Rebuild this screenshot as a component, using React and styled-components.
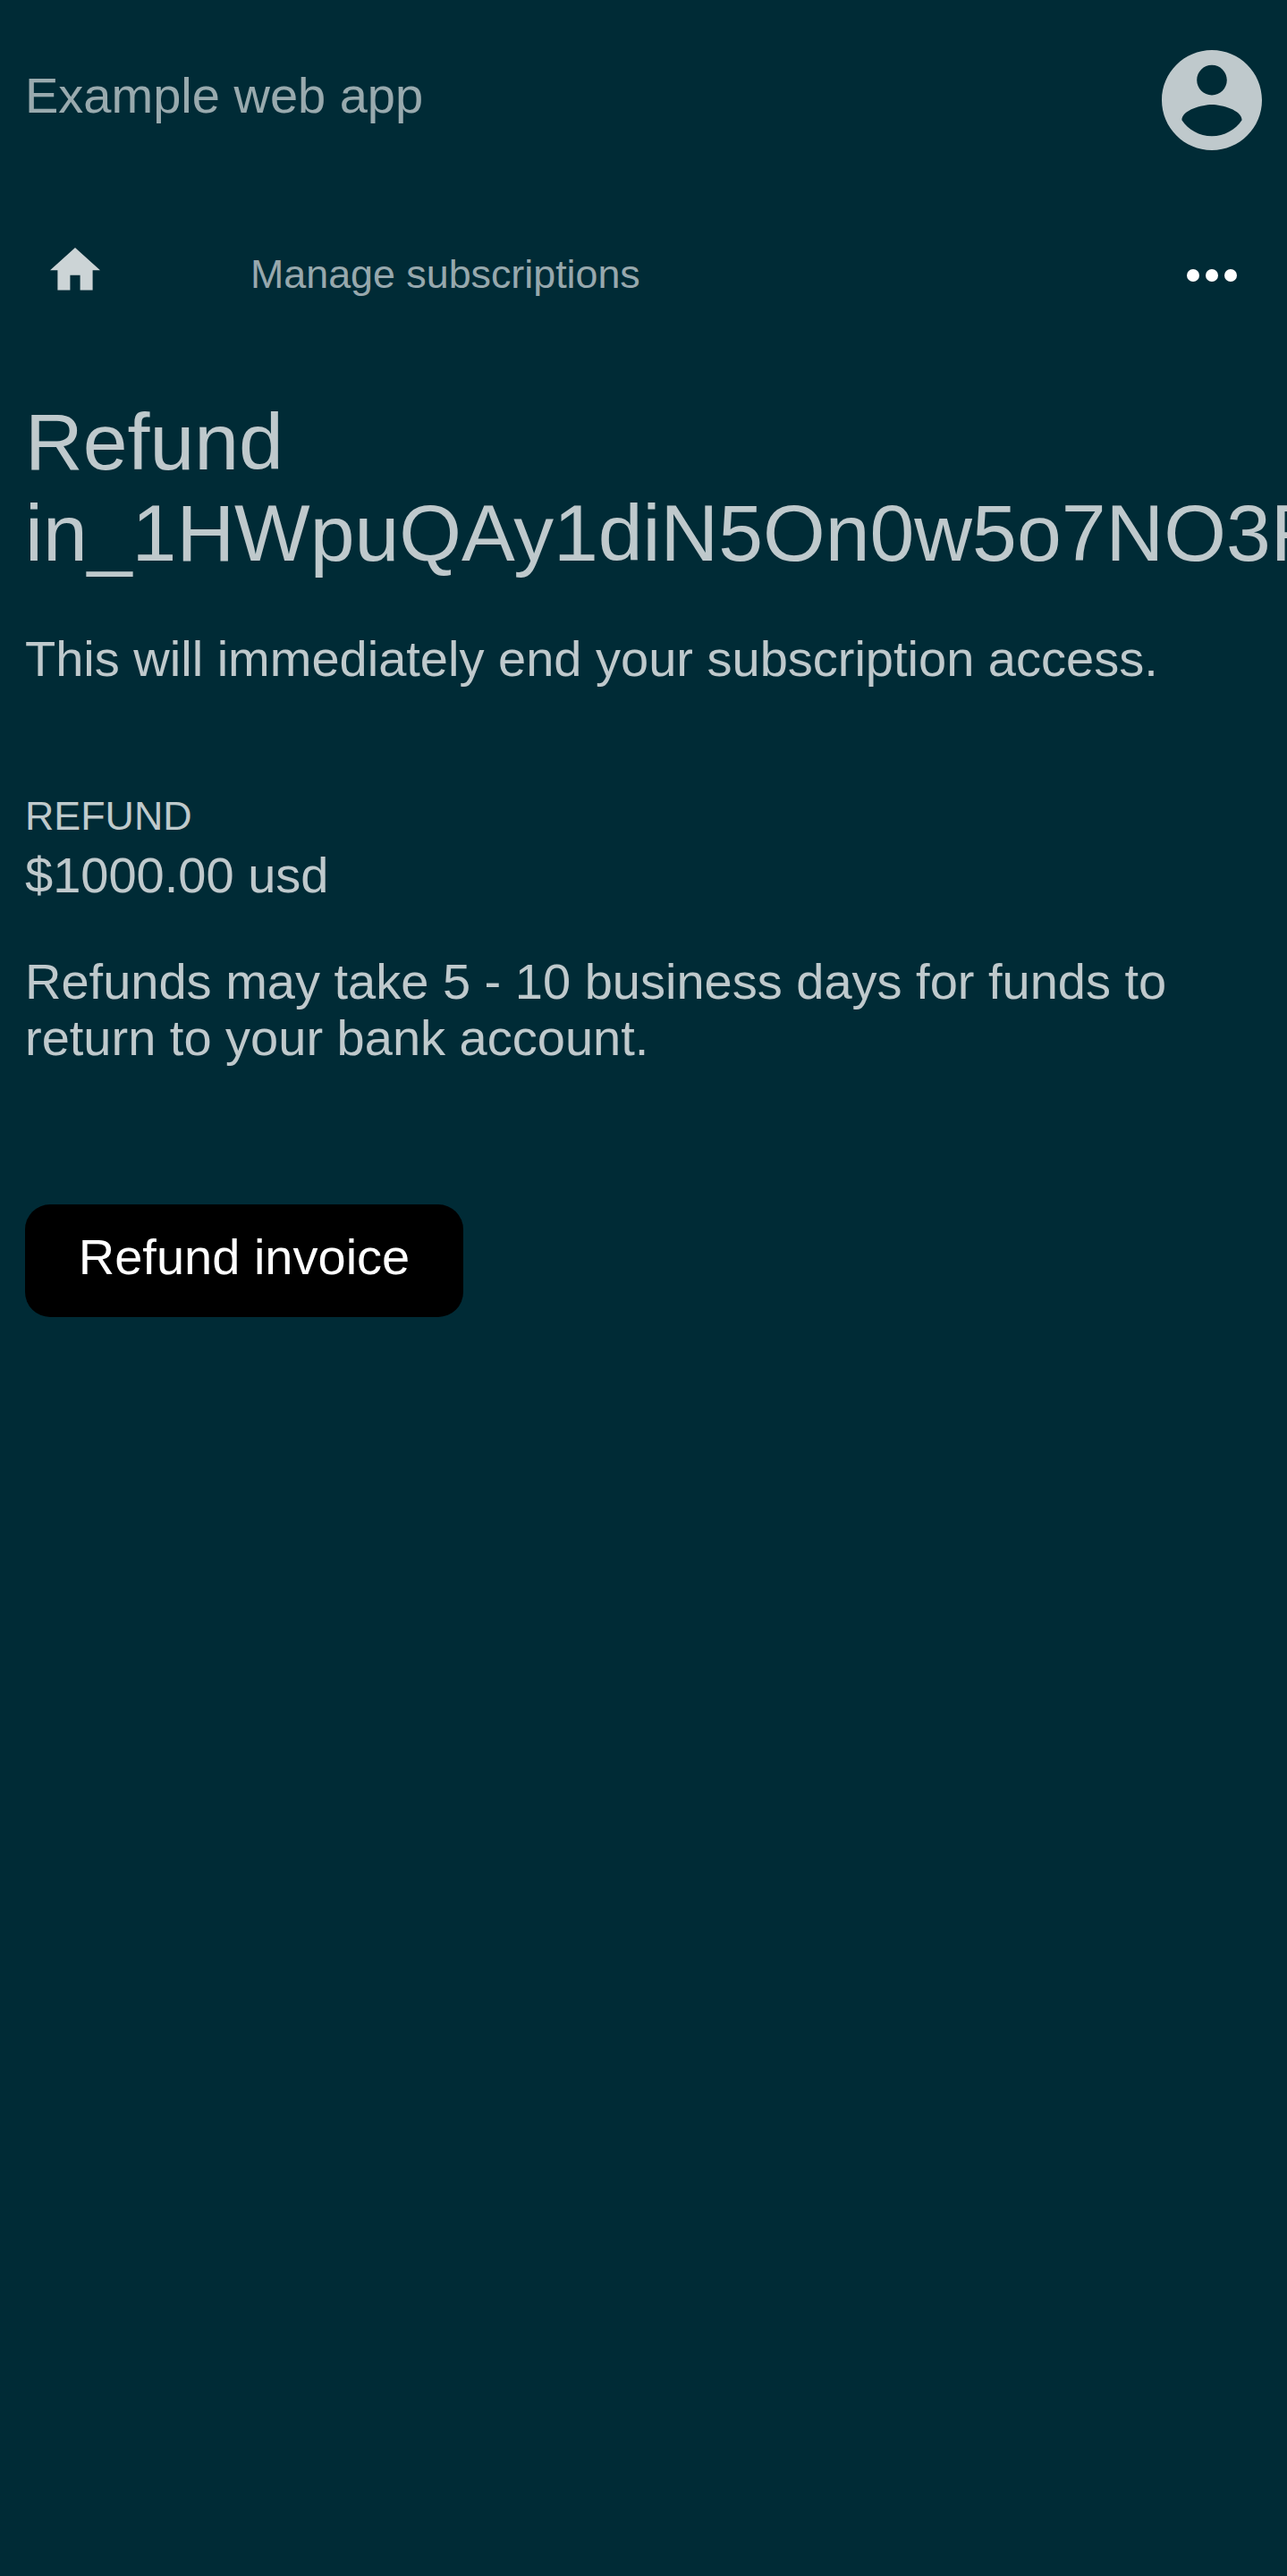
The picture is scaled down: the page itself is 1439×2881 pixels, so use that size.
import React from 'react';
import styled, { createGlobalStyle } from 'styled-components';

const GlobalStyle = createGlobalStyle`
  html, body {
    margin: 0;
    background: #002b36;
    overflow: hidden;
  }
`;

const Page = styled.div`
  box-sizing: border-box;
  width: 100%;
  min-height: 100vh;
  overflow: hidden;
  background: #002b36;
  color: rgba(255, 255, 255, 0.75);
  font-family: "Liberation Sans", Arial, sans-serif;
  font-size: 56px;
  line-height: 63px;
`;

const Header = styled.header`
  display: flex;
  justify-content: space-between;
  align-items: flex-start;
  height: 168px;
  padding: 56px 28px 0;
`;

const AppName = styled.div`
  margin-top: 19px;
  color: rgba(255, 255, 255, 0.6);
`;

const Icon = styled.svg`
  display: block;
  flex: none;
  width: ${(p) => p.$size}px;
  height: ${(p) => p.$height || p.$size}px;
  fill: ${(p) => p.$color};
`;

const NavBar = styled.nav`
  display: flex;
  align-items: flex-start;
  height: 219px;
  padding: 0 56px;
`;

const NavItem = styled.a`
  display: block;
  margin-top: ${(p) => p.$top}px;
`;

const NavLink = styled(NavItem)`
  flex: 1;
  margin-left: 168px;
  color: rgba(255, 255, 255, 0.6);
  font-size: 44.8px;
  line-height: 52px;
`;

const Main = styled.main`
  padding: 0 28px;
`;

const Title = styled.h1`
  margin: 0 0 58px;
  font-size: 89.6px;
  font-weight: 400;
  line-height: 102px;
`;

const Paragraph = styled.p`
  margin: 0 0 ${(p) => p.$gap}px;
`;

const Label = styled.div`
  margin-bottom: 9px;
  font-size: 44.8px;
  line-height: 52px;
  text-transform: uppercase;
`;

const Button = styled.button`
  display: block;
  box-sizing: border-box;
  width: 490px;
  height: 126px;
  padding: 0 59.5px 9px;
  border: 0;
  border-radius: 28px;
  background: #000;
  color: #fff;
  font: inherit;
  white-space: nowrap;
`;

export default function App() {
  return (
    <>
      <GlobalStyle />
      <Page>
        <Header>
          <AppName>Example web app</AppName>
          <Icon $size={112} $color="rgba(255, 255, 255, 0.75)" viewBox="2 2 20 20">
            <path d="M12 2C6.48 2 2 6.48 2 12s4.48 10 10 10 10-4.48 10-10S17.52 2 12 2zm0 3c1.66 0 3 1.34 3 3s-1.34 3-3 3-3-1.34-3-3 1.34-3 3-3zm0 14.2c-2.5 0-4.71-1.28-6-3.22.03-1.99 4-3.08 6-3.08 1.99 0 5.97 1.09 6 3.08-1.29 1.94-3.5 3.22-6 3.22z" />
          </Icon>
        </Header>
        <NavBar>
          <NavItem $top={53}>
            <Icon $size={56} $height={47.6} $color="rgba(255, 255, 255, 0.8)" viewBox="2 3 20 17">
              <path d="M10 20v-6h4v6h5v-8h3L12 3 2 12h3v8z" />
            </Icon>
          </NavItem>
          <NavLink $top={56}>Manage subscriptions</NavLink>
          <NavItem $top={77}>
            <Icon $size={56} $height={14} $color="#fff" viewBox="4 10 16 4">
              <circle cx="6" cy="12" r="2" />
              <circle cx="12" cy="12" r="2" />
              <circle cx="18" cy="12" r="2" />
            </Icon>
          </NavItem>
        </NavBar>
        <Main>
          <Title>Refund in_1HWpuQAy1diN5On0w5o7NO3F</Title>
          <Paragraph $gap={118}>This will immediately end your subscription access.</Paragraph>
          <Label>Refund</Label>
          <Paragraph $gap={56}>$1000.00 usd</Paragraph>
          <Paragraph $gap={155}>
            Refunds may take 5 - 10 business days for funds to return to your bank account.
          </Paragraph>
          <Button>Refund invoice</Button>
        </Main>
      </Page>
    </>
  );
}
